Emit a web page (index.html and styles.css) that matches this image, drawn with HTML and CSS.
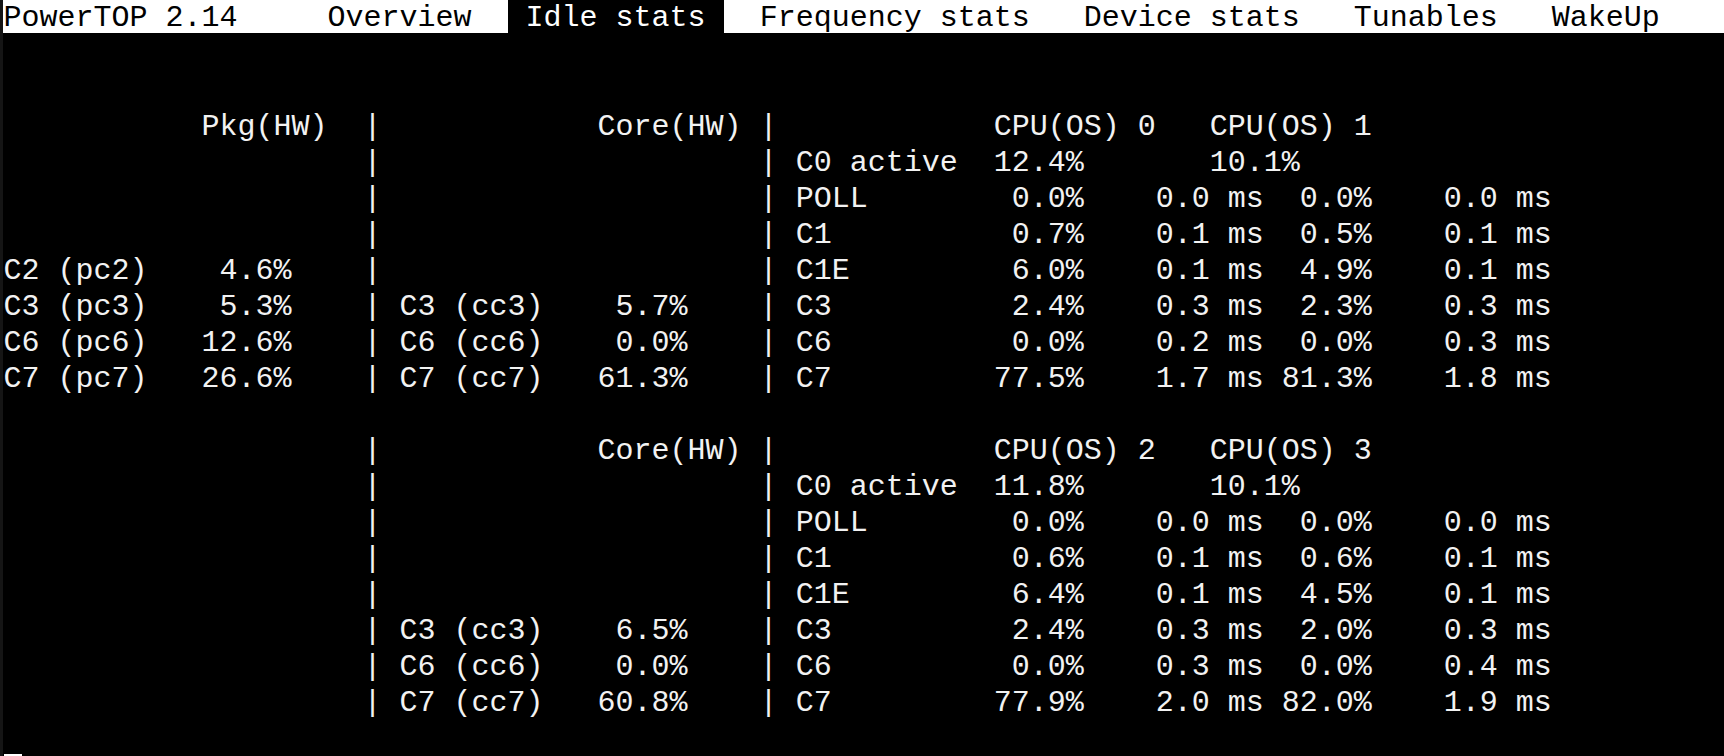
FILE: index.html
```html
<!DOCTYPE html>
<html lang="en">
<head>
<meta charset="utf-8">
<title>PowerTOP 2.14 - Idle stats</title>
<link rel="stylesheet" href="styles.css">
</head>
<body>
<div class="term">
<div class="header">PowerTOP 2.14     Overview  <span class="tab"> Idle stats </span>  Frequency stats   Device stats   Tunables   WakeUp</div>
<div class="ln"></div>
<div class="ln"></div>
<div class="ln">           Pkg(HW)  |            Core(HW) |            CPU(OS) 0   CPU(OS) 1</div>
<div class="ln">                    |                     | C0 active  12.4%       10.1%</div>
<div class="ln">                    |                     | POLL        0.0%    0.0 ms  0.0%    0.0 ms</div>
<div class="ln">                    |                     | C1          0.7%    0.1 ms  0.5%    0.1 ms</div>
<div class="ln">C2 (pc2)    4.6%    |                     | C1E         6.0%    0.1 ms  4.9%    0.1 ms</div>
<div class="ln">C3 (pc3)    5.3%    | C3 (cc3)    5.7%    | C3          2.4%    0.3 ms  2.3%    0.3 ms</div>
<div class="ln">C6 (pc6)   12.6%    | C6 (cc6)    0.0%    | C6          0.0%    0.2 ms  0.0%    0.3 ms</div>
<div class="ln">C7 (pc7)   26.6%    | C7 (cc7)   61.3%    | C7         77.5%    1.7 ms 81.3%    1.8 ms</div>
<div class="ln"></div>
<div class="ln">                    |            Core(HW) |            CPU(OS) 2   CPU(OS) 3</div>
<div class="ln">                    |                     | C0 active  11.8%       10.1%</div>
<div class="ln">                    |                     | POLL        0.0%    0.0 ms  0.0%    0.0 ms</div>
<div class="ln">                    |                     | C1          0.6%    0.1 ms  0.6%    0.1 ms</div>
<div class="ln">                    |                     | C1E         6.4%    0.1 ms  4.5%    0.1 ms</div>
<div class="ln">                    | C3 (cc3)    6.5%    | C3          2.4%    0.3 ms  2.0%    0.3 ms</div>
<div class="ln">                    | C6 (cc6)    0.0%    | C6          0.0%    0.3 ms  0.0%    0.4 ms</div>
<div class="ln">                    | C7 (cc7)   60.8%    | C7         77.9%    2.0 ms 82.0%    1.9 ms</div>
<div class="cursor"></div>
</div>
</body>
</html>
```

FILE: styles.css
```css
html, body {
  margin: 0;
  padding: 0;
  background: #000;
}

body {
  width: 1724px;
  height: 756px;
  overflow: hidden;
}

.term {
  box-sizing: border-box;
  height: 756px;
  border-left: 3px solid #151515;
  font-family: "Liberation Mono", "DejaVu Sans Mono", monospace;
  font-size: 30px;
  line-height: 36px;
  color: #f2f2f2;
}

.header {
  height: 33px;
  margin-bottom: 3.7px;
  padding-left: 0.5px;
  background: #fff;
  color: #000;
  white-space: pre;
}

.tab {
  display: inline-block;
  vertical-align: top;
  height: 33px;
  background: #000;
  color: #fff;
}

.ln {
  height: 36px;
  padding-left: 0.5px;
  white-space: pre;
}

.cursor {
  width: 18px;
  height: 4px;
  margin: 33px 0 0 1px;
  background: #fff;
}
```
